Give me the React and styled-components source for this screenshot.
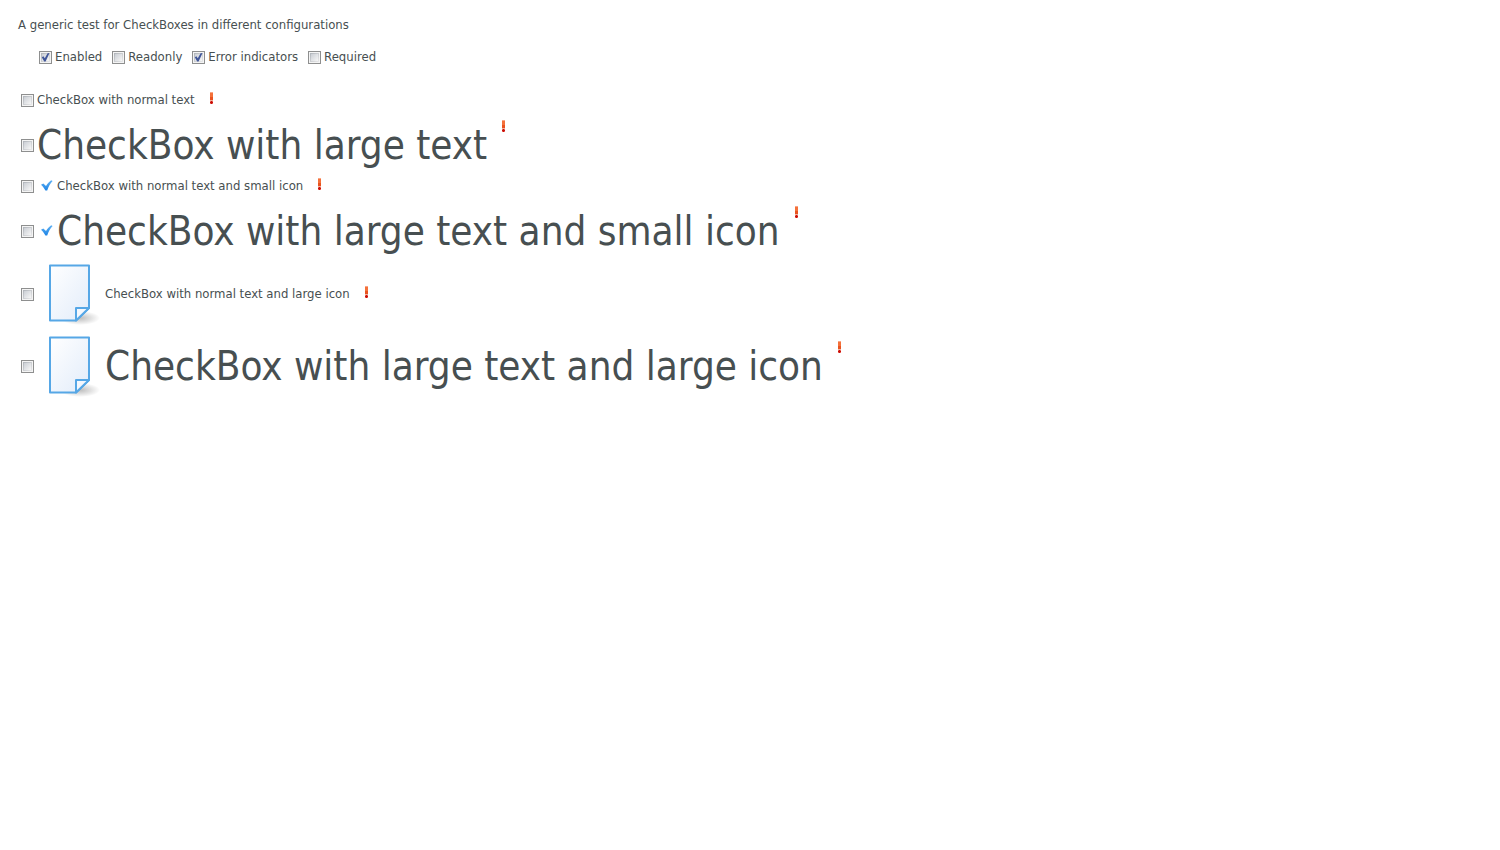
import React, { useState } from "react";
import styled, { createGlobalStyle } from "styled-components";

const GlobalStyle = createGlobalStyle`
  body {
    margin: 0;
    background: #fff;
    color: #474f51;
    font-family: "DejaVu Sans Condensed", "DejaVu Sans", sans-serif;
    font-size: 13px;
    line-height: 16px;
  }
`;

const Page = styled.main`
  padding: 17px 18px;
`;

const Intro = styled.p`
  margin: 0;
`;

const Options = styled.fieldset`
  display: flex;
  flex-wrap: wrap;
  gap: 10px;
  margin: 16px 0 0;
  padding: 0 21px;
  border: 0;
`;

const Samples = styled.section`
  display: flex;
  flex-direction: column;
  margin-top: 15px;
  padding-left: 3px;
`;

const Row = styled.div`
  display: flex;
  align-items: center;
  min-height: ${(p) => p.$height}px;
`;

const Field = styled.label`
  display: inline-flex;
  align-items: center;
`;

const Box = styled.input`
  appearance: none;
  flex: none;
  box-sizing: border-box;
  width: 13px;
  height: 13px;
  margin: 0 3px 0 0;
  border: 1px solid #8e8f8f;
  background:
    linear-gradient(135deg, #cbcfd5, #f6f6f6) center / 7px 7px no-repeat,
    linear-gradient(135deg, #aeb3b9, #e9e9ea) center / 9px 9px no-repeat,
    #f4f4f4;

  &:checked {
    background:
      url("data:image/svg+xml,%3Csvg xmlns='http://www.w3.org/2000/svg' viewBox='0 0 11 11'%3E%3Cpath d='M1.8 5.2 3.4 4.2 4.8 6.2 7.6 1.2 9.5 1 5.6 9.4 4.2 9.4Z' fill='%23405699'/%3E%3C/svg%3E") center / 11px 11px no-repeat,
      linear-gradient(135deg, #cbcfd5, #f6f6f6) center / 7px 7px no-repeat,
      linear-gradient(135deg, #aeb3b9, #e9e9ea) center / 9px 9px no-repeat,
      #f4f4f4;
  }
`;

const Caption = styled.span`
  font-size: ${(p) => (p.$large ? 40 : 13)}px;
  line-height: ${(p) => (p.$large ? 50 : 16)}px;
`;

const IconSlot = styled.span`
  display: flex;
  margin: 0 2px;
`;

const Content = styled.span`
  display: flex;
  align-items: flex-start;
  gap: 14px;
`;

const MarkIcon = styled.svg`
  flex: none;
  display: block;
`;

function ErrorMark() {
  return (
    <MarkIcon width="5" height="13" viewBox="0 0 5 13" role="img" aria-label="Error">
      <path d="M1 0h3v1H1z" fill="#f9a585" />
      <path d="M1 1h3v4H1z" fill="#f4713a" />
      <path d="M1 5h3v3H1z" fill="#e9531f" />
      <path d="M1 8h3v1H1z" fill="#f3b3a0" />
      <path d="M1 9h3v3H1z" fill="#e8695c" />
      <path d="M2 9h1v1h1v1H3v1H2v-1H1v-1h1z" fill="#c90f0a" />
    </MarkIcon>
  );
}

function SmallIcon() {
  return (
    <svg width="16" height="16" viewBox="0 0 16 16" aria-hidden="true">
      <defs>
        <linearGradient id="tick" x1="0" y1="0" x2="0" y2="1">
          <stop offset="0" stopColor="#62b2f2" />
          <stop offset="1" stopColor="#1c83e6" />
        </linearGradient>
      </defs>
      <path d="M2 6.8 4.3 5.4 7 8C8.5 5.6 10.2 3.6 12.2 2.2L13.6 3.1C11.2 5.8 9.5 8.8 8.2 12.4L6.4 12.6C5.3 10.4 3.9 8.4 2 6.8Z" fill="url(#tick)" />
    </svg>
  );
}

function LargeIcon() {
  return (
    <svg width="64" height="64" viewBox="0 0 64 64" aria-hidden="true">
      <defs>
        <linearGradient id="paper" x1="0" y1="0" x2="1" y2="1">
          <stop offset="0" stopColor="#fff" />
          <stop offset="1" stopColor="#e2ecfa" />
        </linearGradient>
        <radialGradient id="shadow">
          <stop offset="0" stopColor="#000" stopOpacity=".26" />
          <stop offset="1" stopColor="#000" stopOpacity="0" />
        </radialGradient>
      </defs>
      <ellipse cx="41" cy="56" rx="20" ry="7" fill="url(#shadow)" />
      <path d="M11 3.5H50V46L37 58.5H11Z" fill="url(#paper)" stroke="#56a7e6" strokeWidth="2" strokeLinejoin="round" />
      <path d="M37 58.5V46H50Z" fill="#f4f8fe" stroke="#56a7e6" strokeWidth="2" strokeLinejoin="round" />
    </svg>
  );
}

const ICONS = { small: SmallIcon, large: LargeIcon };

function CheckField({ label, icon, large, showError, ...inputProps }) {
  const Icon = ICONS[icon];
  return (
    <Field>
      <Box type="checkbox" {...inputProps} />
      {Icon && (
        <IconSlot>
          <Icon />
        </IconSlot>
      )}
      <Content>
        <Caption $large={large}>{label}</Caption>
        {showError && <ErrorMark />}
      </Content>
    </Field>
  );
}

const SAMPLES = [
  { label: "CheckBox with normal text", height: 40 },
  { label: "CheckBox with large text", large: true, height: 50 },
  { label: "CheckBox with normal text and small icon", icon: "small", height: 32 },
  { label: "CheckBox with large text and small icon", icon: "small", large: true, height: 58 },
  { label: "CheckBox with normal text and large icon", icon: "large", height: 68 },
  { label: "CheckBox with large text and large icon", icon: "large", large: true, height: 76 },
];

export default function App() {
  const [options, setOptions] = useState({
    Enabled: true,
    Readonly: false,
    "Error indicators": true,
    Required: false,
  });

  return (
    <Page>
      <GlobalStyle />
      <Intro>A generic test for CheckBoxes in different configurations</Intro>
      <Options aria-label="Options">
        {Object.keys(options).map((name) => (
          <CheckField
            key={name}
            label={name}
            checked={options[name]}
            onChange={(e) => setOptions({ ...options, [name]: e.target.checked })}
          />
        ))}
      </Options>
      <Samples>
        {SAMPLES.map(({ height, ...sample }) => (
          <Row key={sample.label} $height={height}>
            <CheckField
              {...sample}
              disabled={!options.Enabled || options.Readonly}
              required={options.Required}
              showError={options["Error indicators"]}
            />
          </Row>
        ))}
      </Samples>
    </Page>
  );
}
